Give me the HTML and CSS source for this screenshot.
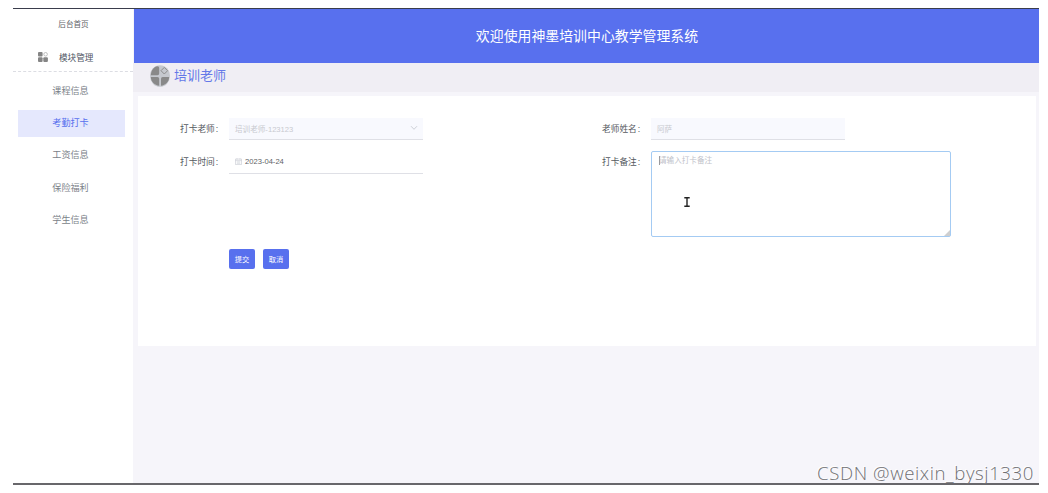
FILE: index.html
```
<!DOCTYPE html>
<html lang="en">
<head>
    <meta charset="UTF-8">
    <title>神墨培训中心教学管理系统</title>
    <link rel="stylesheet" href="styles.css">
</head>
<body>
<div class="app">
    <div class="sidebar">
        <div class="home">后台首页</div>
        <div class="module">
            <svg class="moduleIcon" viewBox="0 0 10 10">
                <rect x="0" y="0" width="4.6" height="4.6" rx="1"/>
                <rect x="0" y="5.3" width="4.6" height="4.6" rx="1"/>
                <rect x="5.3" y="5.3" width="4.6" height="4.6" rx="1"/>
                <circle class="ring" cx="7.6" cy="2.3" r="1.8"/>
            </svg>
            <span>模块管理</span>
        </div>
        <ul>
            <li>课程信息</li>
            <li class="cur">考勤打卡</li>
            <li>工资信息</li>
            <li>保险福利</li>
            <li>学生信息</li>
        </ul>
    </div>
    <div class="main">
        <div class="header">欢迎使用神墨培训中心教学管理系统</div>
        <div class="crumb">
            <svg class="crumbIcon" viewBox="0 0 20 22">
                <ellipse class="bg" cx="10" cy="11" rx="10" ry="10.8"/>
                <path d="M9.2 3V8.500Q9.200 10.200 7.500 10.200H.8C1 5.500 4 1.600 7.500 1.300Q9.200 1.300 9.200 3Z"/>
                <path d="M.8 12H7.500Q9.200 12 9.200 13.700V20.700C4.500 20.300 1 17 .8 12Z"/>
                <path d="M19.200 12H12.700Q11 12 11 13.700V20.700C15.500 20.300 19 17 19.200 12Z"/>
                <path class="ring" d="M14.300 2.400L17.600 5.700L14.300 9L11 5.700Z"/>
            </svg>
            <span>培训老师</span>
        </div>
        <div class="card">
            <div class="row">
                <div class="item">
                    <label>打卡老师<b>:</b></label>
                    <div class="input disabled">
                        <span>培训老师-123123</span>
                        <svg class="arrow" viewBox="0 0 8 6"><path d="M1 1.200L4 4.300L7 1.200"/></svg>
                    </div>
                </div>
                <div class="item">
                    <label>老师姓名<b>:</b></label>
                    <div class="input disabled"><span>阿萨</span></div>
                </div>
            </div>
            <div class="row">
                <div class="item">
                    <label>打卡时间<b>:</b></label>
                    <div class="input date">
                        <svg class="calendar" viewBox="0 0 8 8"><path d="M.5 1.200H7.500V7.500H.5ZM.5 3H7.500M2.300 .3V1.800M5.700 .3V1.800M2 4.500H6M2 6H6"/></svg>
                        <span>2023-04-24</span>
                    </div>
                </div>
                <div class="item">
                    <label>打卡备注<b>:</b></label>
                    <div class="textarea">
                        <i class="caret"></i><span>请输入打卡备注</span>
                        <svg class="mouse" viewBox="0 0 6 10"><path d="M.3 .8H5.700M.3 9.200H5.700M3 .8V9.200"/></svg>
                        <svg class="grip" viewBox="0 0 6 6"><path d="M0 6L6 0V6Z"/></svg>
                    </div>
                </div>
            </div>
            <div class="btns">
                <a href="javascript:void(0);">提交</a>
                <a href="javascript:void(0);">取消</a>
            </div>
        </div>
    </div>
    <div class="watermark">CSDN @weixin_bysj1330</div>
</div>
</body>
</html>
```

FILE: styles.css
```
*{
    margin: 0;
    padding: 0;
    box-sizing: border-box;
}
body{
    background: #fff;
    font-family: "Liberation Sans", "Noto Sans CJK SC", sans-serif;
    color: #606266;
}
ul{
    list-style: none;
}
svg{
    display: block;
    flex: none;
}
.app{
    position: relative;
    display: flex;
    width: 1026px;
    height: 477px;
    margin: 8px 0 0 13px;
    border-top: 1px solid #3a3d4c;
    border-bottom: 2px solid #68676b;
}

/*左侧菜单*/
.sidebar{
    width: 120px;
    flex: none;
    text-align: center;
}
.sidebar .home{
    height: 32px;
    line-height: 32px;
    padding-left: 1px;
    font-size: 7.6px;
}
.sidebar .module{
    display: flex;
    align-items: center;
    height: 31px;
    padding: 2px 0 0 25px;
    border-bottom: 1px dashed #dcdde3;
    font-size: 8.6px;
    color: #4e5563;
}
.moduleIcon{
    width: 10px;
    height: 10px;
    margin-right: 11px;
    fill: #858585;
}
.moduleIcon .ring{
    fill: none;
    stroke: #a6a6a6;
    stroke-width: .7;
}
.sidebar ul{
    padding: 6px 8px 0 5px;
}
.sidebar li{
    height: 27px;
    line-height: 27px;
    margin-bottom: 5.2px;
    padding-right: 2px;
    font-size: 9.1px;
    color: #7b7f88;
}
.sidebar li.cur{
    background: #e5e8fd;
    color: #5870ee;
}

/*右侧*/
.main{
    flex: 1;
    background: #f6f5fa;
}
.header{
    height: 54px;
    line-height: 54px;
    margin-left: 1px;
    padding-left: 1px;
    background: #5870ee;
    color: #fff;
    font-size: 13.9px;
    text-align: center;
}
.crumb{
    display: flex;
    align-items: center;
    height: 29px;
    padding: 0 0 3px 17px;
    background: #f0eef4;
    color: #6478e8;
    font-size: 13px;
}
.crumb span{
    padding-bottom: 3px;
}
.crumbIcon{
    width: 20px;
    height: 22px;
    margin-right: 4px;
    fill: #898989;
}
.crumbIcon .bg{
    fill: #c5c8ce;
}
.crumbIcon .ring{
    fill: none;
    stroke: #8d8d8d;
}
.card{
    height: 250px;
    margin: 4px 3px 0 5px;
    padding-top: 22px;
    background: #fff;
}
.row{
    display: flex;
    padding-left: 42px;
}
.item{
    display: flex;
    width: 422px;
    height: 33px;
}
.item label{
    width: 49px;
    flex: none;
    line-height: 22px;
    font-size: 8.7px;
    color: #555960;
}
.item label b{
    margin-left: 1px;
    font-weight: normal;
}
.input{
    display: flex;
    align-items: center;
    width: 194px;
    height: 22px;
    padding: 0 5px 1px 6px;
    border-bottom: 1px solid #dfe0e6;
    font-size: 7.6px;
}
.disabled{
    background: #f8f9fe;
    color: #c8cad0;
}
.date{
    height: 23px;
}
.arrow{
    width: 8px;
    height: 6px;
    margin-left: auto;
    fill: none;
    stroke: #c0c4cc;
    stroke-width: .8;
}
.calendar{
    width: 7px;
    height: 7px;
    margin-right: 3px;
    fill: none;
    stroke: #c4c7cf;
    stroke-width: .7;
}
.textarea{
    position: relative;
    flex: none;
    display: flex;
    width: 300px;
    height: 86px;
    padding: 3px 7px;
    border: 1px solid #a4cbf3;
    border-radius: 2px;
    font-size: 7.6px;
    line-height: 11px;
    color: #c0c2ca;
}
.caret{
    width: 1px;
    height: 9px;
    margin: 1px -1px 0 0;
    background: #999;
}
/*鼠标浮在输入框上面*/
.mouse{
    position: absolute;
    left: 32px;
    top: 45px;
    width: 6px;
    height: 10px;
    fill: none;
    stroke: #222;
    stroke-width: 1.4;
}
.grip{
    position: absolute;
    right: 0;
    bottom: 0;
    width: 6px;
    height: 6px;
    fill: #cfcfcf;
}
.btns{
    display: flex;
    gap: 8px;
    padding: 65px 0 0 91px;
}
.btns a{
    width: 26px;
    height: 20px;
    line-height: 21px;
    border-radius: 2px;
    background: #5870ee;
    color: #fff;
    font-size: 7.2px;
    text-align: center;
    text-decoration: none;
}
.watermark{
    position: absolute;
    right: 5px;
    bottom: -1px;
    font-family: "Open Sans", "Liberation Sans", sans-serif;
    font-weight: 300;
    font-size: 18.6px;
    letter-spacing: .6px;
    line-height: 22px;
    color: #707073;
    text-shadow: -1px -1px 0 #fff;
}
```
